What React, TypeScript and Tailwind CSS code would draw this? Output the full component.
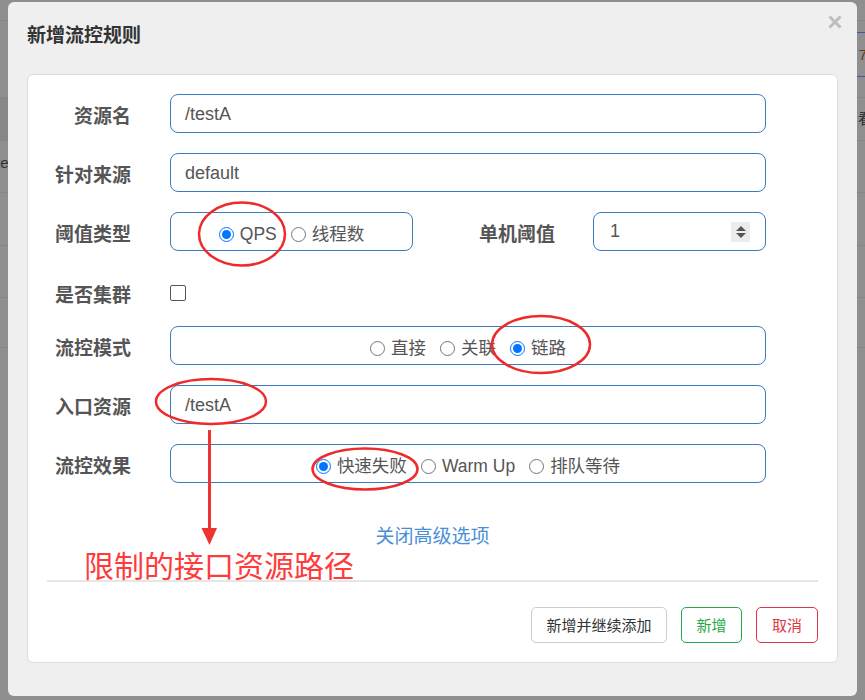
import React from "react";

const FONT = "font-['Liberation_Sans','Noto_Sans_CJK_SC',sans-serif]";

function Radio({ checked, label, className = "" }: { checked?: boolean; label: string; className?: string }) {
  return (
    <span className={"inline-flex items-center " + className}>
      {checked ? (
        <span className="w-[15px] h-[15px] rounded-full border-[1.5px] border-[#0075ff] bg-white flex items-center justify-center">
          <span className="w-[9px] h-[9px] rounded-full bg-[#0075ff]" />
        </span>
      ) : (
        <span className="w-[15px] h-[15px] rounded-full border border-[#767676] bg-white" />
      )}
      <span className="ml-[6px] text-[17.5px] text-[#555]">{label}</span>
    </span>
  );
}

function Label({ children, w = "w-[84px]" }: { children: React.ReactNode; w?: string }) {
  return (
    <div className={w + " shrink-0 pt-[5px] text-right text-[19px] font-bold text-[#555] leading-none"}>{children}</div>
  );
}

function TextBox({ value }: { value: string }) {
  return (
    <div className="w-[596px] h-[39px] ml-[39px] border border-[#3a7cbd] rounded-[8px] flex items-center px-[14px] pt-[1px] text-[18px] text-[#555]">
      {value}
    </div>
  );
}

function Spinner() {
  return (
    <span className="w-[19px] h-[20px] bg-[#ececec] flex items-center justify-center">
      <svg width="12" height="14" viewBox="0 0 12 14">
        <path d="M6 1L11 6H1Z" fill="#555" />
        <path d="M6 13L11 8H1Z" fill="#555" />
      </svg>
    </span>
  );
}

function Background() {
  // the page behind the modal
  const rows = [20, 97, 140, 192, 245, 297, 347];
  return (
    <div className="absolute inset-0">
      {rows.map((y) => (
        <div key={y} className="absolute left-0 right-0 h-px bg-[#858585]" style={{ top: y }} />
      ))}
      <div className="absolute left-0 top-[97px] w-[8px] h-[43px] bg-[#888]" />
      <div className="absolute right-0 top-[32px] w-[8px] h-px bg-[#3a5f8f]" />
      <div className="absolute right-0 top-[76px] w-[8px] h-px bg-[#3a5f8f]" />
      <div className="absolute left-[-4px] top-[152px] text-[15px] text-[#333]">te</div>
      <div className="absolute right-[-2px] top-[44px] text-[15px] text-[#6b3a10]">7</div>
      <div className="absolute right-[-8px] top-[108px] text-[15px] text-[#333]">看</div>
    </div>
  );
}

function Annotations() {
  return (
    <>
      <svg className="absolute left-0 top-0 pointer-events-none" width="865" height="700" viewBox="0 0 865 700">
        <g fill="none" stroke="#ee2a2a" strokeWidth="2.5">
          <ellipse cx="242" cy="234" rx="43" ry="31.5" />
          <ellipse cx="541" cy="344.5" rx="49" ry="28.5" />
          <ellipse cx="211" cy="401.5" rx="55" ry="22.5" />
          <ellipse cx="365" cy="469" rx="52.5" ry="20.5" />
        </g>
        <path d="M208 430H211V528H208Z" fill="#ee3333" />
        <path d="M201.5 528H217L209.5 545Z" fill="#ee3333" />
      </svg>
      <div className="absolute left-[84px] top-[549px] text-[30px] leading-none text-[#ff3b3b] font-['Noto_Sans_CJK_SC',sans-serif] pointer-events-none">
        限制的接口资源路径
      </div>
    </>
  );
}

export default function App() {
  return (
    <div className={"relative w-[865px] h-[700px] bg-[#8f8f8f] overflow-hidden " + FONT}>
      <Background />

      <div className="absolute left-[8px] top-[2px] w-[849px] h-[694px] rounded-[6px] bg-[#efefef] px-[19px] flex flex-col">
        <div className="h-[72px] shrink-0 flex items-start pt-[19px]">
          <div className="text-[19px] font-bold text-[#333] leading-[26px] font-['Noto_Sans_CJK_SC',sans-serif]">
            新增流控规则
          </div>
        </div>
        <button className="absolute right-[15px] top-[12px] w-[15px] h-[15px] flex items-center justify-center">
          <svg width="14" height="14" viewBox="0 0 14 14">
            <path d="M1.5 1.5L12.5 12.5M12.5 1.5L1.5 12.5" stroke="#bdbdbd" strokeWidth="3" />
          </svg>
        </button>

        <div className="w-[811px] h-[589px] bg-white border border-[#dcdcdc] rounded-[6px] px-[19px] pt-[19px] flex flex-col">
          <div className="flex items-center h-[39px]">
            <Label>资源名</Label>
            <TextBox value="/testA" />
          </div>

          <div className="flex items-center h-[39px] mt-[20px]">
            <Label>针对来源</Label>
            <TextBox value="default" />
          </div>

          <div className="flex items-center h-[39px] mt-[20px]">
            <Label>阈值类型</Label>
            <div className="w-[243px] h-[39px] ml-[39px] border border-[#3a7cbd] rounded-[8px] flex items-center justify-center pt-[5px]">
              <Radio checked label="QPS" />
              <Radio label="线程数" className="ml-[14px]" />
            </div>
            <Label w="w-[142px]">单机阈值</Label>
            <div className="w-[173px] h-[39px] ml-[38px] border border-[#3a7cbd] rounded-[8px] flex items-center justify-between pl-[16px] pr-[15px] text-[18px] text-[#555]">
              <span>1</span>
              <Spinner />
            </div>
          </div>

          <div className="flex items-center h-[35px] mt-[20px] pt-[8px]">
            <Label>是否集群</Label>
            <span className="ml-[39px] w-[16px] h-[16px] rounded-[2px] border border-[#555] bg-white" />
          </div>

          <div className="flex items-center h-[39px] mt-[20px]">
            <Label>流控模式</Label>
            <div className="w-[596px] h-[39px] ml-[39px] border border-[#3a7cbd] rounded-[8px] flex items-center justify-center pt-[5px]">
              <Radio label="直接" />
              <Radio label="关联" className="ml-[14px]" />
              <Radio checked label="链路" className="ml-[14px]" />
            </div>
          </div>

          <div className="flex items-center h-[39px] mt-[20px]">
            <Label>入口资源</Label>
            <TextBox value="/testA" />
          </div>

          <div className="flex items-center h-[39px] mt-[20px]">
            <Label>流控效果</Label>
            <div className="w-[596px] h-[39px] ml-[39px] border border-[#3a7cbd] rounded-[8px] flex items-center justify-center pt-[5px]">
              <Radio checked label="快速失败" />
              <Radio label="Warm Up" className="ml-[14px]" />
              <Radio label="排队等待" className="ml-[14px]" />
            </div>
          </div>

          <div className="mt-[39px] text-center text-[19px] leading-[26px] text-[#4a8fd6] font-['Noto_Sans_CJK_SC',sans-serif]">
            关闭高级选项
          </div>

          <div className="mt-[32px] h-[2px] bg-[#e6e6e6]" />

          <div className="mt-[25px] flex justify-end gap-[14px] text-[15px] font-['Noto_Sans_CJK_SC',sans-serif]">
            <button className="w-[136px] h-[36px] border border-[#cccccc] rounded-[5px] text-[#333] bg-white">
              新增并继续添加
            </button>
            <button className="w-[61px] h-[36px] border border-[#28a745] rounded-[5px] text-[#28a745] bg-white">
              新增
            </button>
            <button className="w-[62px] h-[36px] border border-[#dc3545] rounded-[5px] text-[#dc3545] bg-white">
              取消
            </button>
          </div>
        </div>
      </div>

      <Annotations />
    </div>
  );
}
